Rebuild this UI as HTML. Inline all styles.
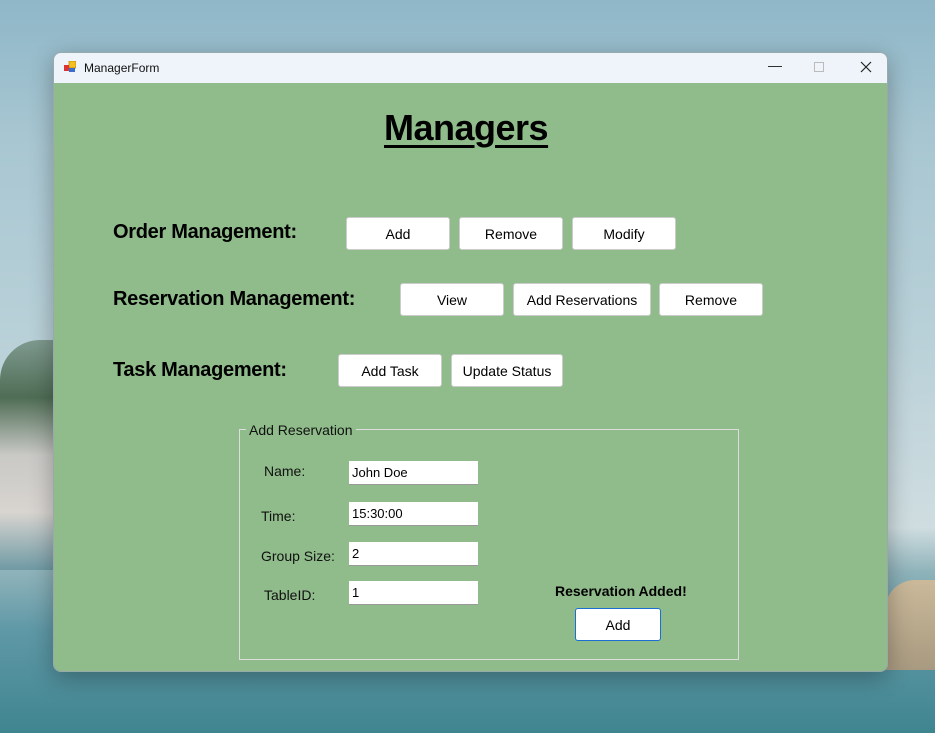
<!DOCTYPE html>
<html><head><meta charset="utf-8"><style>
*{margin:0;padding:0;box-sizing:border-box}
body{width:935px;height:733px;overflow:hidden;font-family:"Liberation Sans",sans-serif;position:relative;
background:linear-gradient(180deg,#8fb7c8 0%,#a9c7d2 20%,#b8d0d8 45%,#cfdde0 72%,#8fb3ba 78%,#5f98a6 86%,#3f8590 100%);}
.m1{position:absolute;left:0;top:340px;width:60px;height:230px;background:linear-gradient(180deg,#7f9a90,#4f6d55 25%,#c9c9c6 50%,#d8d4d0 75%,#6f9aa4 100%);border-radius:40px 0 0 0}
.m2{position:absolute;left:885px;top:580px;width:50px;height:90px;background:linear-gradient(180deg,#cbb99a,#a89a80);border-radius:30px 0 0 0}
.win{position:absolute;left:53px;top:52px;width:835px;height:620px;border-radius:8px;overflow:hidden;box-shadow:0 6px 24px rgba(0,0,0,.3);border:1px solid #9aa}
.tb{height:30px;background:#eef4f9;position:relative;font-size:12px;color:#111}
.tb .t{position:absolute;left:30px;top:8px}
.ico{position:absolute;left:10px;top:8px;width:12px;height:12px}
.ctl{position:absolute;top:6px;font-size:14px;color:#222}
.body{position:absolute;top:30px;left:0;right:0;bottom:0;background:#8fbc8a}
.abs{position:absolute}
h1{position:absolute;left:330px;top:24px;font-size:36px;font-weight:bold;text-decoration:underline;text-underline-offset:5px;letter-spacing:-0.5px}
.lab{position:absolute;font-size:20px;font-weight:bold;color:#000;letter-spacing:-0.3px}
.btn{position:absolute;height:33px;background:#fff;border:1px solid #ccc;border-radius:3px;font-size:14px;display:flex;align-items:center;justify-content:center;color:#000}
.gb{position:absolute;left:185px;top:346px;width:500px;height:231px;border:1px solid #ddd}
.gbt{position:absolute;left:192px;top:339px;background:#8fbc8a;padding:0 3px;font-size:14px;color:#111}
.fl{position:absolute;font-size:14px;color:#111}
.in{position:absolute;left:295px;width:129px;height:24px;background:#fff;border-bottom:1px solid #999;font-size:13px;padding:4px 3px}
</style></head><body>
<div class="m1"></div><div class="m2"></div>
<div class="win">
 <div class="tb">
  <svg class="ico" viewBox="0 0 12 12"><rect x="5" y="0" width="7" height="7" fill="#f4c020" stroke="#a07000" stroke-width=".6"/><rect x="0" y="4" width="5" height="6" fill="#d33" /><rect x="5" y="7" width="6" height="4" fill="#3a6fd0"/></svg>
  <span class="t">ManagerForm</span>
  <span class="ctl" style="left:714px;top:4px">&#8212;</span>
  <span class="ctl" style="left:760px;width:10px;height:10px;top:9px;border:1px solid #bbb"></span>
  <svg class="ctl" style="left:806px;top:8px" width="12" height="12"><path d="M1 1L11 11M11 1L1 11" stroke="#222" stroke-width="1.2"/></svg>
 </div>
 <div class="body">
  <h1>Managers</h1>
  <div class="lab" style="left:59px;top:138px">Order Management:</div>
  <div class="btn" style="left:292px;top:134px;width:104px">Add</div>
  <div class="btn" style="left:405px;top:134px;width:104px">Remove</div>
  <div class="btn" style="left:518px;top:134px;width:104px">Modify</div>
  <div class="lab" style="left:59px;top:205px">Reservation Management:</div>
  <div class="btn" style="left:346px;top:200px;width:104px">View</div>
  <div class="btn" style="left:459px;top:200px;width:138px">Add Reservations</div>
  <div class="btn" style="left:605px;top:200px;width:104px">Remove</div>
  <div class="lab" style="left:59px;top:276px">Task Management:</div>
  <div class="btn" style="left:284px;top:271px;width:104px">Add Task</div>
  <div class="btn" style="left:397px;top:271px;width:112px">Update Status</div>
  <div class="gb"></div>
  <div class="gbt">Add Reservation</div>
  <div class="fl" style="left:210px;top:380px">Name:</div>
  <div class="fl" style="left:207px;top:425px">Time:</div>
  <div class="fl" style="left:207px;top:465px">Group Size:</div>
  <div class="fl" style="left:210px;top:504px">TableID:</div>
  <div class="in" style="top:378px">John Doe</div>
  <div class="in" style="top:419px">15:30:00</div>
  <div class="in" style="top:459px">2</div>
  <div class="in" style="top:498px">1</div>
  <div class="abs" style="left:501px;top:500px;font-size:14px;font-weight:bold">Reservation Added!</div>
  <div class="btn" style="left:521px;top:525px;width:86px;border:1px solid #1a6fd0">Add</div>
 </div>
</div>
</body></html>
